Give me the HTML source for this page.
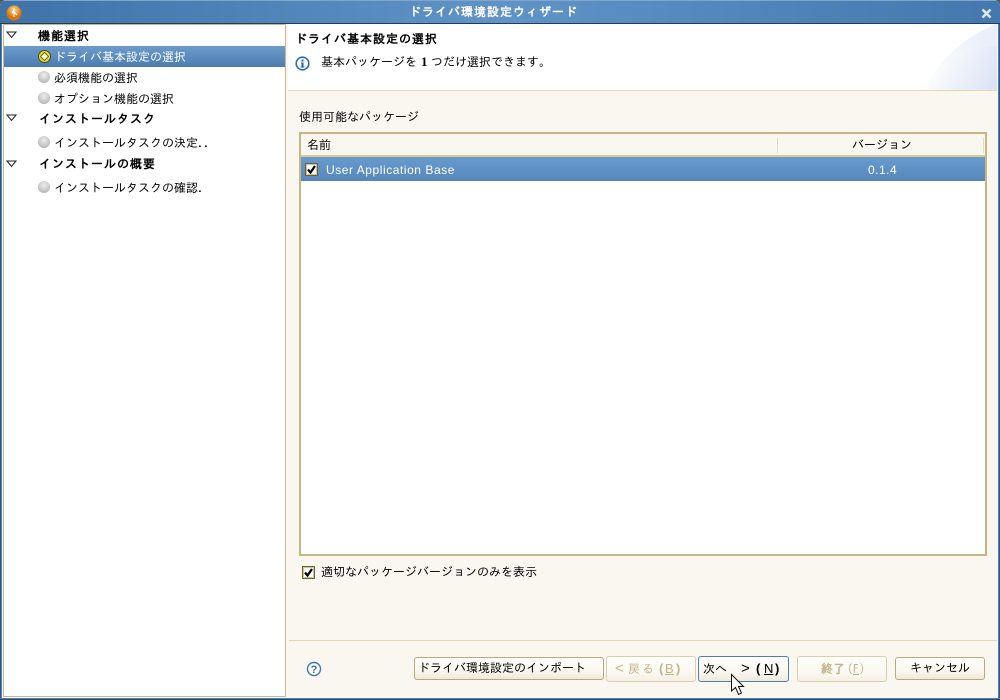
<!DOCTYPE html>
<html lang="ja"><head><meta charset="utf-8"><title>ドライバ環境設定ウィザード</title>
<style>
html,body{margin:0;padding:0;width:1000px;height:700px;overflow:hidden;background:#555}
body{position:relative;font-family:"Liberation Sans","IPAGothic","Noto Sans CJK JP",sans-serif;font-size:12px;color:#000}
.a{position:absolute;white-space:nowrap;line-height:16px}
.j{font-family:"IPAGothic","Noto Sans CJK JP",sans-serif;font-size:12px}
.b{font-weight:bold;letter-spacing:1px}
.btn{position:absolute;top:657px;height:23px;box-sizing:border-box;border:1px solid #b9a97e;border-radius:3px;background:linear-gradient(#fffefb,#fbf8f1 60%,#efe9da);text-align:center;line-height:21px;white-space:nowrap;font-family:"IPAGothic","Noto Sans CJK JP",sans-serif;font-size:12px}
.dis{border-color:#dccfae;top:656px;height:26px;background:linear-gradient(#fffefb,#fbf8f1 70%,#f4efe3)}
.dot{position:absolute;left:38px;width:12px;height:12px;border-radius:50%;background:radial-gradient(circle at 50% 35%,#eee,#c4c4c4 60%,#a5a5a5)}
.tw{position:absolute;left:6px}
.l{font-family:"Liberation Sans",sans-serif;font-size:13px}
</style></head><body>
<div style="position:absolute;left:0;top:0;width:1000px;height:700px;border-radius:6px 6px 0 0;background:#faf7f0;overflow:hidden">
<div style="position:absolute;left:0;top:0;width:1000px;height:24px;box-sizing:border-box;background:linear-gradient(90deg,#3f72a6,#6093c6 50%,#4478ae);border-top:1px solid #7ea6cf;border-bottom:1px solid #1f3d5c"></div>
<div style="position:absolute;left:0;top:24px;width:2px;height:676px;background:linear-gradient(90deg,#2a5a8c 50%,#4f82b6 50%)"></div>
<div style="position:absolute;left:998px;top:24px;width:2px;height:676px;background:linear-gradient(90deg,#4f82b6 50%,#2a5a8c 50%)"></div>
<div style="position:absolute;left:0;top:698px;width:1000px;height:2px;background:linear-gradient(#4f82b6 50%,#234a73 50%)"></div>
</div>
<svg style="position:absolute;left:6px;top:5px" width="17" height="17"><defs><radialGradient id="o" cx=".5" cy=".3"><stop offset="0" stop-color="#ffd890"/><stop offset="1" stop-color="#d9750f"/></radialGradient></defs><circle cx="8" cy="8" r="7.5" fill="url(#o)"/><path d="M8 3v9M8 4L6 8.5M8 7l3 3" stroke="#fff" stroke-width="1" fill="none"/></svg>
<div class="a j b" style="left:409px;top:4px;color:#fff">ドライバ環境設定ウィザード</div>
<svg style="position:absolute;left:981px;top:8px" width="11" height="11"><path d="M1.5 1.5l8 8M9.5 1.5l-8 8" stroke="#dfe8f2" stroke-width="2.6"/></svg>

<div style="position:absolute;left:3px;top:24px;width:283px;height:673px;box-sizing:border-box;background:#fff;border:1px solid #c9b98d"></div>
<div style="position:absolute;left:4px;top:46px;width:281px;height:21px;background:linear-gradient(#6d9ccb,#4b7cb1)"></div>

<svg class="tw" style="top:31px" width="11" height="8"><path d="M1 1h9L5.5 6.5z" fill="#fff" stroke="#222"/></svg>
<svg class="tw" style="top:114px" width="11" height="8"><path d="M1 1h9L5.5 6.5z" fill="#fff" stroke="#222"/></svg>
<svg class="tw" style="top:160px" width="11" height="8"><path d="M1 1h9L5.5 6.5z" fill="#fff" stroke="#222"/></svg>

<div class="a j b" style="left:38px;top:28px">機能選択</div>
<svg style="position:absolute;left:38px;top:50px" width="13" height="13"><circle cx="6.5" cy="6.5" r="6" fill="#e8dc30" stroke="#4d4d18" stroke-width="1"/><path d="M6.5 2.5L10.5 6.5 6.5 10.5 2.5 6.5z" fill="#fffbd0" stroke="#6a6a10"/></svg>
<div class="a j" style="left:54px;top:49px;color:#fff">ドライバ基本設定の選択</div>
<div class="dot" style="top:71px"></div><div class="a j" style="left:54px;top:70px">必須機能の選択</div>
<div class="dot" style="top:92px"></div><div class="a j" style="left:54px;top:91px">オプション機能の選択</div>
<div class="a j b" style="left:39px;top:111px">インストールタスク</div>
<div class="dot" style="top:136px"></div><div class="a j" style="left:54px;top:135px">インストールタスクの決定..</div>
<div class="a j b" style="left:39px;top:156px">インストールの概要</div>
<div class="dot" style="top:181px"></div><div class="a j" style="left:54px;top:180px">インストールタスクの確認.</div>

<div style="position:absolute;left:288px;top:24px;width:709px;height:66px;background:#fff;border-bottom:1px solid #e6d7b4"></div>
<svg style="position:absolute;left:917px;top:24px" width="80" height="66"><defs><linearGradient id="w1" x1="0" x2="1" y1="1" y2=".5"><stop offset="0" stop-color="#fff"/><stop offset="1" stop-color="#eaeff9"/></linearGradient><linearGradient id="w2" x1="0" x2="1" y1=".7" y2="1"><stop offset="0" stop-color="#fff"/><stop offset="1" stop-color="#d9e1f3"/></linearGradient></defs><path d="M6 66C22 36 48 12 80 0V66z" fill="url(#w1)"/><path d="M6 66C26 40 52 22 80 22V66z" fill="url(#w2)"/></svg>
<div class="a j b" style="left:295px;top:31px">ドライバ基本設定の選択</div>
<svg style="position:absolute;left:295px;top:56px" width="15" height="15"><circle cx="7.5" cy="7.5" r="6.3" fill="#fff" stroke="#2a6fb0" stroke-width="1.6"/><rect x="6.5" y="3.5" width="2" height="2" fill="#1d5f9f"/><path d="M6 6.5h2.5v4h1v1h-4v-1h1v-3H6z" fill="#1d5f9f"/></svg>
<div class="a j" style="left:321px;top:54px">基本パッケージを</div>
<div class="a" style="left:421px;top:54px;font-family:'Liberation Serif',serif;font-weight:bold;font-size:13px">1</div>
<div class="a j" style="left:431px;top:54px">つだけ選択できます。</div>

<div class="a j" style="left:299px;top:109px">使用可能なパッケージ</div>
<div style="position:absolute;left:299px;top:132px;width:688px;height:424px;box-sizing:border-box;border:2px solid #c8b584;background:#fff"></div>
<div style="position:absolute;left:301px;top:134px;width:684px;height:21px;background:#faf7f0;border-bottom:2px solid #dcc99b"></div>
<div style="position:absolute;left:777px;top:138px;width:1px;height:15px;background:#e3dcc8"></div>
<div style="position:absolute;left:983px;top:138px;width:1px;height:15px;background:#e3dcc8"></div>
<div class="a j" style="left:307px;top:137px">名前</div>
<div class="a j" style="left:852px;top:137px">バージョン</div>
<div style="position:absolute;left:301px;top:157px;width:684px;height:24px;background:linear-gradient(#6a9bcd,#5587bd)"></div>
<div style="position:absolute;left:305px;top:163px;width:13px;height:13px;box-sizing:border-box;background:#fff;border:1px solid #6e6138;box-shadow:inset 0 0 0 1px #cfc39c"></div>
<svg style="position:absolute;left:305px;top:163px" width="13" height="13"><path d="M3 6.5l2.5 3L10 3" fill="none" stroke="#000" stroke-width="2.2"/></svg>
<div class="a" style="left:326px;top:162px;color:#fff;letter-spacing:.55px">User Application Base</div>
<div class="a" style="left:868px;top:162px;color:#fff;letter-spacing:.5px">0.1.4</div>

<div style="position:absolute;left:302px;top:566px;width:13px;height:13px;box-sizing:border-box;background:#fff;border:1px solid #6e6138;box-shadow:inset 0 0 0 1px #cfc39c"></div>
<svg style="position:absolute;left:302px;top:566px" width="13" height="13"><path d="M3 6.5l2.5 3L10 3" fill="none" stroke="#000" stroke-width="2.2"/></svg>
<div class="a j" style="left:321px;top:564px">適切なパッケージバージョンのみを表示</div>

<div style="position:absolute;left:289px;top:640px;width:708px;height:1px;background:#e6d7b4"></div>
<svg style="position:absolute;left:306px;top:661px" width="16" height="16"><circle cx="8" cy="8" r="6.5" fill="#fff" stroke="#3f78b0" stroke-width="1.4"/><text x="8" y="12" font-size="11" font-weight="bold" text-anchor="middle" fill="#3a6ea5" font-family="Liberation Sans">?</text></svg>
<div class="btn" style="left:414px;width:190px;text-align:left;padding-left:3px">ドライバ環境設定のインポート</div>
<div class="btn dis" style="left:606px;width:90px"></div>
<div class="a l" style="left:615px;top:661px;color:#c4b48a;font-size:15px">&lt;</div>
<div class="a j" style="left:628px;top:661px;color:#c4b48a;letter-spacing:2px">戻る</div>
<div class="a l" style="left:659px;top:661px;color:#c4b48a;font-weight:bold">(</div>
<div class="a l" style="left:665px;top:661px;color:#c4b48a"><u>B</u></div>
<div class="a l" style="left:676px;top:661px;color:#c4b48a;font-weight:bold">)</div>
<div class="btn" style="left:698px;width:91px;top:656px;height:26px;border-color:#4f7fae"></div>
<div class="a j" style="left:703px;top:661px">次へ</div>
<div class="a l" style="left:741px;top:661px;font-size:15px">&gt;</div>
<div class="a l" style="left:756px;top:661px;font-weight:bold">(</div>
<div class="a l" style="left:764px;top:661px"><u>N</u></div>
<div class="a l" style="left:775px;top:661px;font-weight:bold">)</div>
<div class="btn dis" style="left:797px;width:90px"></div>
<div class="a j" style="left:821px;top:661px;color:#c4b48a;font-weight:bold">終了</div>
<div class="a j" style="left:847px;top:661px;color:#c4b48a">(<u>F</u>)</div>
<div class="btn" style="left:895px;width:90px">キャンセル</div>
<svg style="position:absolute;left:730px;top:673px" width="16" height="24"><path d="M1.5 1.5V18L5.5 14.5 8.5 21.5 11.5 20 8.5 13.5H13.5z" fill="#fff" stroke="#111" stroke-width="1"/></svg>
</body></html>
